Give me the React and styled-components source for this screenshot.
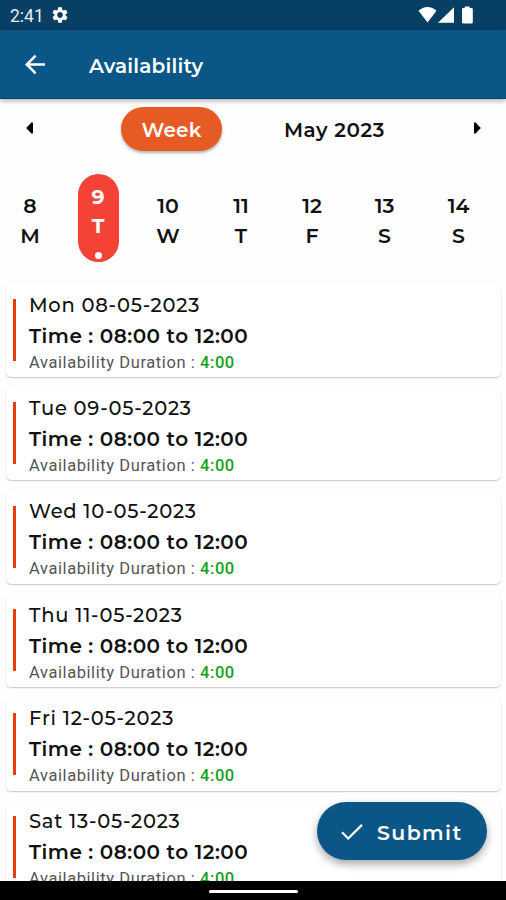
import React, { useState } from 'react';
import styled, { createGlobalStyle } from 'styled-components';

const DAYS = [
  { date: '8', day: 'M' },
  { date: '9', day: 'T' },
  { date: '10', day: 'W' },
  { date: '11', day: 'T' },
  { date: '12', day: 'F' },
  { date: '13', day: 'S' },
  { date: '14', day: 'S' },
];

const SLOTS = [
  { id: 1, date: 'Mon 08-05-2023' },
  { id: 2, date: 'Tue 09-05-2023' },
  { id: 3, date: 'Wed 10-05-2023' },
  { id: 4, date: 'Thu 11-05-2023' },
  { id: 5, date: 'Fri 12-05-2023' },
  { id: 6, date: 'Sat 13-05-2023' },
];

const App = () => {
  const [selected, setSelected] = useState('9');

  return (
    <>
      <GlobalStyle />
      <Screen>
        <StatusBar>
          <Clock>2:41</Clock>
          <SettingsIcon />
          <StatusIcons />
        </StatusBar>
        <Header>
          <BackButton aria-label="Back">
            <svg width="22" height="22" viewBox="0 0 22 22" fill="none">
              <path
                d="M21 10.5H2.8M11.6 1.7L2.8 10.5L11.6 19.3"
                stroke="#fff"
                strokeWidth="2.5"
              />
            </svg>
          </BackButton>
          <Title>Availability</Title>
        </Header>
        <Toolbar>
          <Arrow aria-label="Previous">
            <svg width="8" height="12" viewBox="0 0 8 12">
              <path d="M7 0.5V11.5H5.4L0.2 6L5.4 0.5Z" />
            </svg>
          </Arrow>
          <WeekButton>Week</WeekButton>
          <Month>May 2023</Month>
          <Arrow aria-label="Next">
            <svg width="8" height="12" viewBox="0 0 8 12">
              <path d="M1 0.5V11.5H2.6L7.8 6L2.6 0.5Z" />
            </svg>
          </Arrow>
        </Toolbar>
        <WeekRow>
          {DAYS.map(({ date, day }) => (
            <Day
              key={date}
              $active={selected === date}
              onClick={() => setSelected(date)}
            >
              <span>{date}</span>
              <span>{day}</span>
              {selected === date && <Dot />}
            </Day>
          ))}
        </WeekRow>
        <SlotList>
          {SLOTS.map(slot => (
            <Slot key={slot.id}>
              <SlotBar />
              <SlotDetail>
                <SlotDate>{slot.date}</SlotDate>
                <SlotTime>Time : 08:00 to 12:00</SlotTime>
                <Duration>
                  Availability Duration : <Hours>4:00</Hours>
                </Duration>
              </SlotDetail>
            </Slot>
          ))}
        </SlotList>
        <Submit>
          <svg width="22" height="17" viewBox="0 0 22 17" fill="none">
            <path d="M1 8.3L7.2 14.5L21 0.9" stroke="#fff" strokeWidth="2.3" />
          </svg>
          <span>Submit</span>
        </Submit>
        <NavBar>
          <Handle />
        </NavBar>
      </Screen>
    </>
  );
};

export default App;

const SettingsIcon = () => (
  <svg width="16" height="16" viewBox="2 2 20 20" fill="#fff">
    <path d="M19.14 12.94c.04-.3.06-.61.06-.94 0-.32-.02-.64-.07-.94l2.03-1.58c.18-.14.23-.41.12-.61l-1.92-3.32c-.12-.22-.37-.29-.59-.22l-2.39.96c-.5-.38-1.03-.7-1.62-.94l-.36-2.54c-.04-.24-.24-.41-.48-.41h-3.84c-.24 0-.43.17-.47.41l-.36 2.54c-.59.24-1.13.57-1.62.94l-2.39-.96c-.22-.08-.47 0-.59.22L2.74 8.87c-.12.21-.08.47.12.61l2.03 1.58c-.05.3-.09.63-.09.94s.02.64.07.94l-2.03 1.58c-.18.14-.23.41-.12.61l1.92 3.32c.12.22.37.29.59.22l2.39-.96c.5.38 1.03.7 1.62.94l.36 2.54c.05.24.24.41.48.41h3.84c.24 0 .44-.17.47-.41l.36-2.54c.59-.24 1.13-.56 1.62-.94l2.39.96c.22.08.47 0 .59-.22l1.92-3.32c.12-.22.07-.47-.12-.61l-2.01-1.58zM12 15.6c-1.98 0-3.6-1.62-3.6-3.6s1.62-3.6 3.6-3.6 3.6 1.62 3.6 3.6-1.62 3.6-3.6 3.6z" />
  </svg>
);

// wifi, signal and battery share one drawing
const StatusIcons = () => (
  <StatusSvg width="56" height="18" viewBox="0 0 56 18" fill="#fff">
    <path d="M0.5 4.8C5.5 -0.3 13.5 -0.3 18.5 4.8L9.5 16.4Z" />
    <path d="M20 16.8L36 1.2V16.8Z" />
    <path d="M46.8 0.6H51.6V2H53.6Q54.8 2 54.8 3.2V16.2Q54.8 17.4 53.6 17.4H45.2Q44 17.4 44 16.2V3.2Q44 2 45.2 2H46.8Z" />
  </StatusSvg>
);

const GlobalStyle = createGlobalStyle`
  * {
    box-sizing: border-box;
  }

  body {
    margin: 0;
    background: #fefefe;
  }

  button {
    padding: 0;
    border: 0;
    background: none;
    font: inherit;
    color: inherit;
    cursor: pointer;
  }
`;

const Screen = styled.div`
  position: relative;
  display: flex;
  flex-direction: column;
  width: 506px;
  height: 900px;
  overflow: hidden;
  background: #fefefe;
  color: #111;
  font-family: Montserrat, Inter, sans-serif;
`;

const StatusBar = styled.div`
  display: flex;
  flex: none;
  align-items: center;
  height: 30px;
  padding: 0 32px 0 10px;
  background: #083f64;
`;

const Clock = styled.span`
  width: 42px;
  padding-top: 2px;
  color: #e8eef4;
  font-family: Roboto, sans-serif;
  font-size: 17.5px;
`;

const StatusSvg = styled.svg`
  margin-left: auto;
`;

const Header = styled.header`
  z-index: 1;
  display: flex;
  flex: none;
  align-items: center;
  height: 69px;
  padding: 1px 0 0 24px;
  background: #0a5686;
  border-bottom: 1px solid #064378;
  box-shadow: 0 2px 5px rgba(0, 0, 0, 0.3);
  color: #fff;
`;

const BackButton = styled.button`
  width: 65px;
  height: 22px;
  text-align: left;

  svg {
    display: block;
  }
`;

const Title = styled.h1`
  margin: 3px 0 0;
  font-size: 20px;
  font-weight: 600;
  letter-spacing: 0.2px;
`;

const Toolbar = styled.div`
  display: grid;
  flex: none;
  grid-template-columns: 121px 101px 225px 59px;
  align-items: center;
  height: 60px;
`;

const Arrow = styled.button`
  svg {
    display: block;
    margin: -2px 0 0 26px;
  }
`;

const WeekButton = styled.button`
  height: 44px;
  padding-top: 1px;
  border-radius: 22px;
  background: #e55b23;
  box-shadow: 0 2px 3px rgba(0, 0, 0, 0.3);
  color: #fff;
  font-size: 20px;
  font-weight: 600;
  letter-spacing: 0.2px;
`;

const Month = styled.div`
  padding-top: 2px;
  text-align: center;
  font-size: 20px;
  font-weight: 600;
  letter-spacing: 0.6px;
`;

const WeekRow = styled.div`
  display: grid;
  flex: none;
  grid-template-columns: 60px 76px 64px 82px 60px 85px 63px;
  justify-items: center;
  align-items: center;
  height: 120px;
  padding-bottom: 2px;
`;

const Day = styled.button`
  display: flex;
  flex-direction: column;
  align-items: center;
  width: 41px;
  height: ${props => (props.$active ? '88px' : '60px')};
  padding-top: ${props => (props.$active ? '8px' : '0')};
  margin-top: ${props => (props.$active ? '0' : '5px')};
  border-radius: 21px;
  background: ${props => (props.$active ? '#f44336' : 'none')};
  color: ${props => (props.$active ? '#fff' : '#111')};
  font-size: 20.5px;
  font-weight: ${props => (props.$active ? 700 : 600)};
  line-height: ${props => (props.$active ? '29px' : '30px')};
`;

const Dot = styled.i`
  width: 7px;
  height: 7px;
  margin-top: 12px;
  border-radius: 50%;
  background: #fff;
`;

const SlotList = styled.div`
  flex: 1;
  min-height: 0;
  padding: 5px 5px 0 6px;
  overflow: hidden;
`;

const Slot = styled.div`
  display: flex;
  align-items: center;
  height: 93px;
  padding: 0 7px;
  margin-bottom: 10.4px;
  border-radius: 5px;
  background: #fff;
  box-shadow: 0 1px 1.5px rgba(0, 0, 0, 0.22);
`;

const SlotBar = styled.div`
  width: 3px;
  height: 62px;
  margin-bottom: 1px;
  background: #e63e02;
`;

const SlotDetail = styled.div`
  padding: 2px 0 0 13px;
  white-space: nowrap;
`;

const SlotDate = styled.div`
  font-size: 19.5px;
  font-weight: 500;
  line-height: 30px;
  letter-spacing: 0.75px;
`;

const SlotTime = styled.div`
  padding-top: 1px;
  font-size: 20px;
  font-weight: 650;
  line-height: 30px;
  letter-spacing: 0.5px;
`;

const Duration = styled.div`
  color: #555;
  font-family: Roboto, sans-serif;
  font-size: 16.5px;
  line-height: 23px;
  letter-spacing: 0.58px;
`;

const Hours = styled.span`
  color: #16a01a;
  font-weight: 500;
`;

const Submit = styled.button`
  position: absolute;
  right: 19px;
  bottom: 40px;
  display: flex;
  align-items: center;
  gap: 14px;
  width: 170px;
  height: 58px;
  padding: 2px 0 0 24px;
  border-radius: 29px;
  background: #0a5686;
  box-shadow: 0 4px 8px rgba(0, 0, 0, 0.35);
  color: #fff;
  font-size: 20.5px;
  font-weight: 650;
  letter-spacing: 1.4px;
`;

const NavBar = styled.div`
  display: flex;
  flex: none;
  align-items: center;
  justify-content: center;
  height: 19px;
  padding-top: 1px;
  background: #000;
`;

const Handle = styled.div`
  width: 89px;
  height: 3px;
  border-radius: 2px;
  background: #fff;
`;
